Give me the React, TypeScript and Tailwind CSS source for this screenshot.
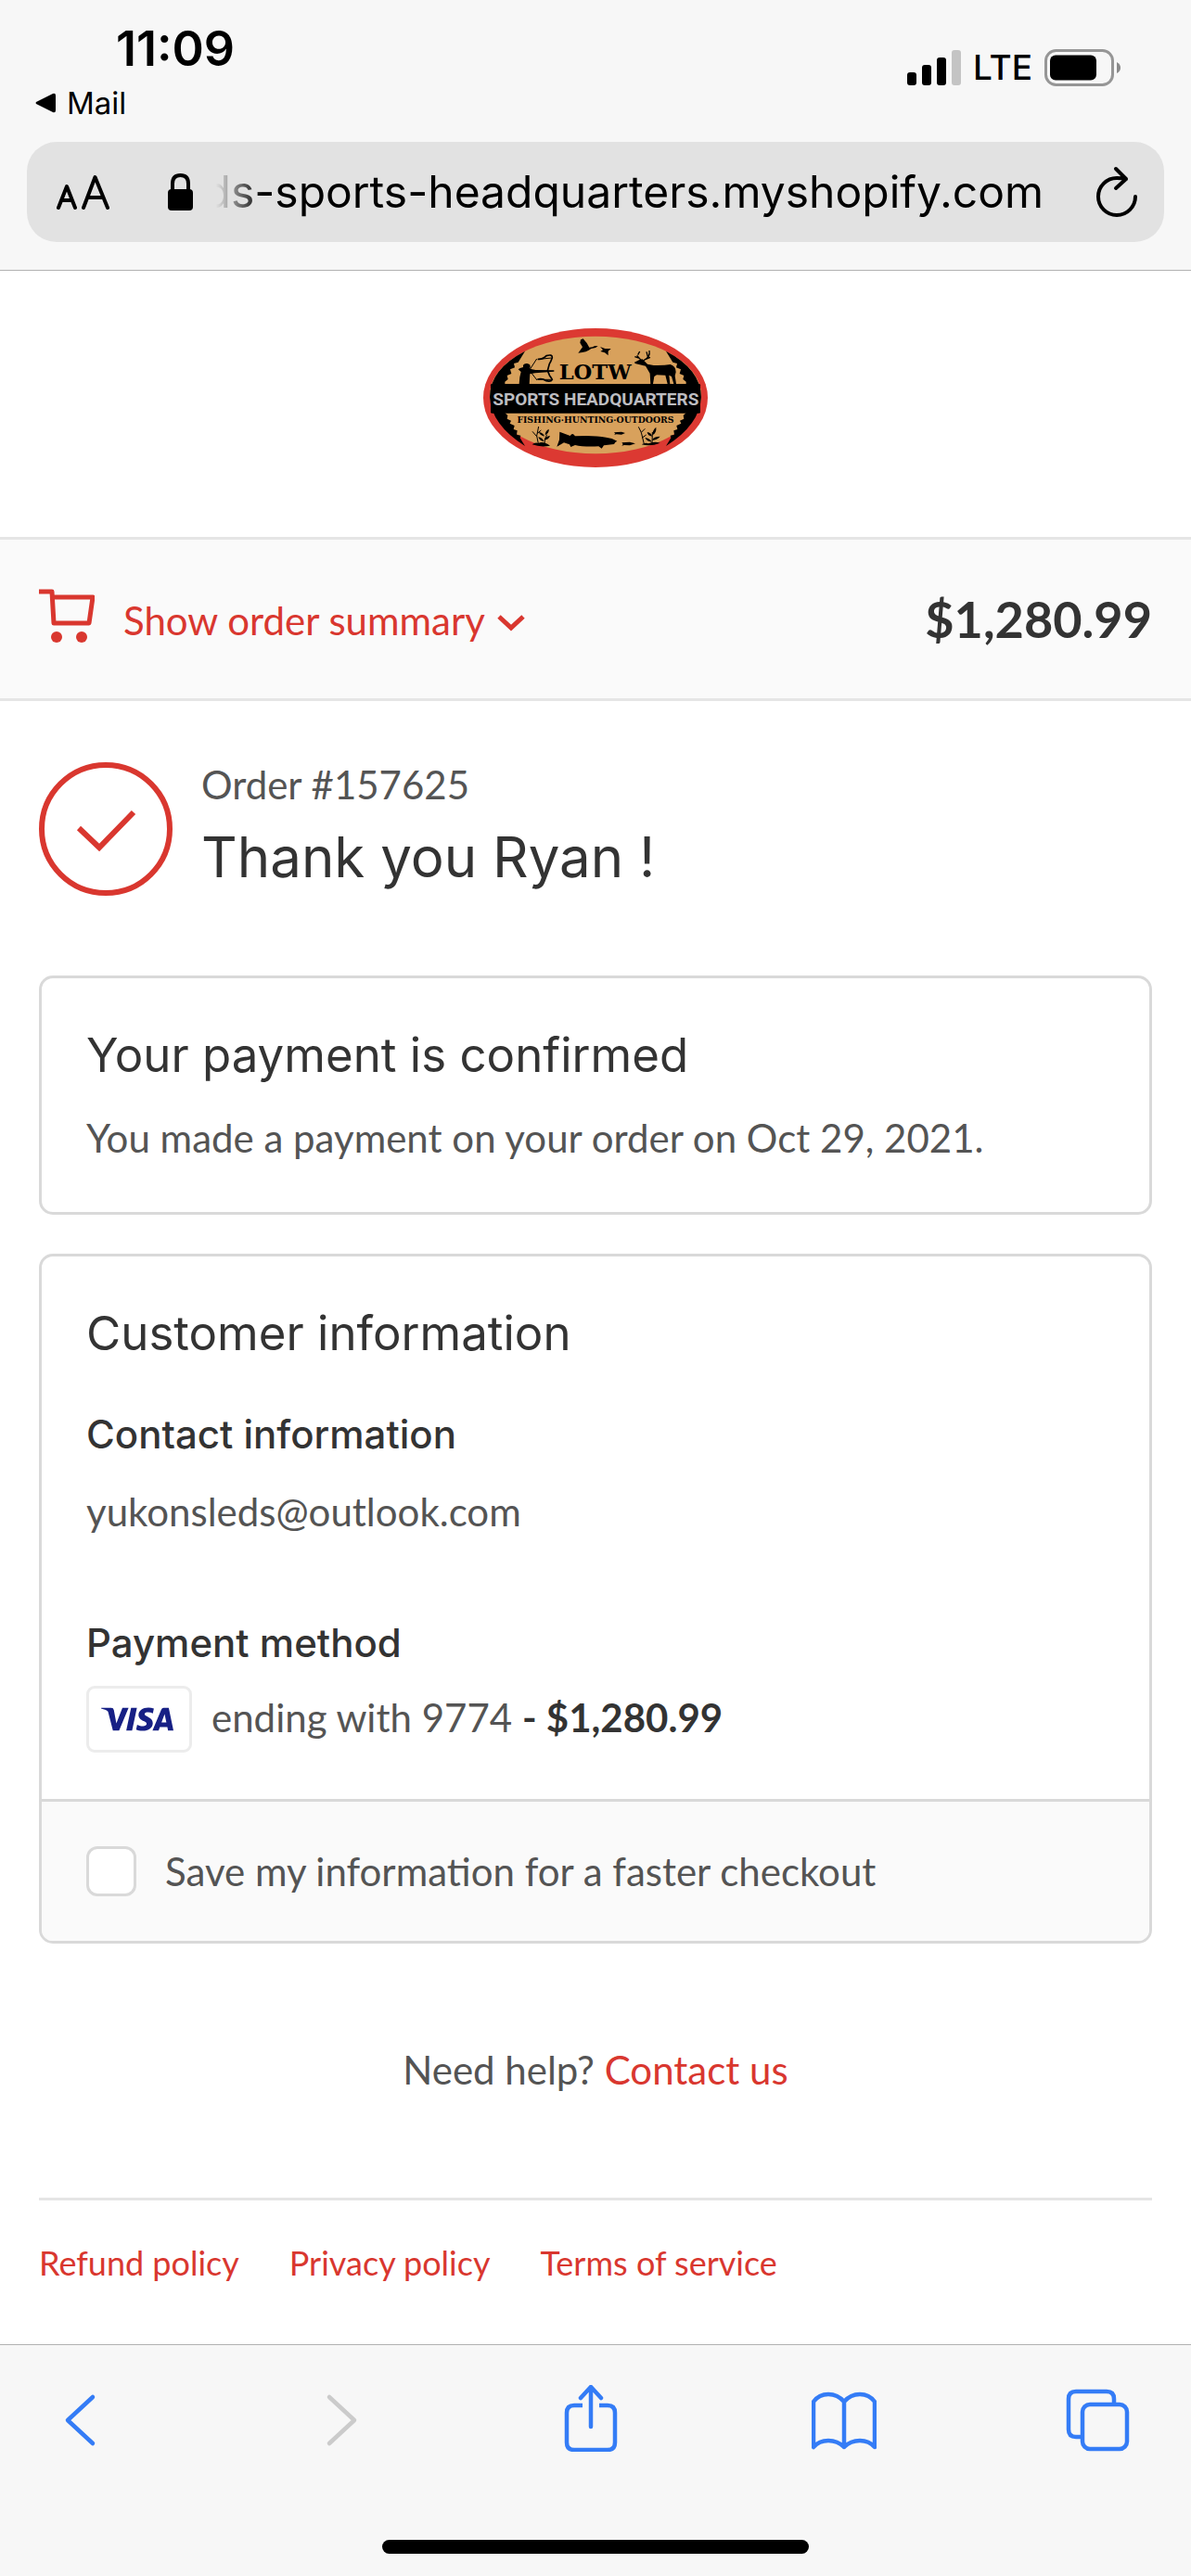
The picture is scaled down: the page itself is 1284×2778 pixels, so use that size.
/**
 * Order confirmation page
 * - shown inside a mobile browser frame (status bar, address bar, toolbar)
 * - order header, payment card, customer card and policy links
 */
import React, { useState } from "react";
import { SiVisa } from "react-icons/si";

const order = {
  number: "157625",
  customer: "Ryan",
  email: "yukonsleds@outlook.com",
  total: "$1,280.99",
  paidOn: "Oct 29, 2021",
  cardLast4: "9774",
};

const policies = ["Refund policy", "Privacy policy", "Terms of service"];

const INTER = "font-['Inter','Liberation_Sans',sans-serif]";

function StatusBar() {
  return (
    <div className="flex items-start justify-between pt-[23px] pr-[76px] pl-[38px]">
      <div>
        <div className="pl-[87px] text-[52px] leading-[60px] font-semibold">
          11:09
        </div>
        <button className="mt-2 flex items-center gap-3 text-[33px] leading-[40px]">
          <svg width="22" height="22" viewBox="0 0 22 22" aria-hidden="true">
            <path d="M1 10 19 1q3-1 3 2v16q0 3-3 2L1 12q-1-1 0-2z" />
          </svg>
          Mail
        </button>
      </div>
      <div className="flex h-[96px] items-center gap-[13px] pt-[4px]">
        {/* signal strength */}
        <svg width="58" height="38" viewBox="0 0 58 38" aria-hidden="true">
          <rect x="0" y="24" width="10" height="14" rx="3" />
          <rect x="16" y="16" width="10" height="22" rx="3" />
          <rect x="32" y="8" width="10" height="30" rx="3" />
          <rect x="48" y="0" width="10" height="38" rx="3" fill="#c4c4c4" />
        </svg>
        <span className="text-[37px] leading-[40px] font-medium">LTE</span>
        {/* battery */}
        <svg width="82" height="40" viewBox="0 0 82 40" aria-hidden="true">
          <rect
            x="1.5"
            y="1.5"
            width="72"
            height="37"
            rx="11"
            fill="none"
            stroke="#969696"
            strokeWidth="3"
          />
          <rect x="6" y="6.5" width="50" height="27" rx="6" />
          <path d="M78 14q4 2 4 6t-4 6z" fill="#8a8a8a" />
        </svg>
      </div>
    </div>
  );
}

function AddressBar() {
  return (
    <div className="mx-[29px] mt-[22px] flex h-[108px] items-center rounded-[32px] bg-[#e2e2e2] pr-[29px] pl-[32px]">
      <button aria-label="Page settings">
        <svg
          width="57"
          height="38"
          viewBox="0 0 57 38"
          fill="none"
          stroke="black"
          strokeWidth="4"
          strokeLinecap="round"
          strokeLinejoin="round"
          aria-hidden="true"
        >
          <path d="M2 36 11 13l9 23M5 28h12M29 36 41.500 3 55 36M34 25h16" />
        </svg>
      </button>
      <svg
        className="ml-[63px]"
        width="27"
        height="40"
        viewBox="0 0 27 40"
        aria-hidden="true"
      >
        <path
          d="M5 18v-7q0-9 8.500-9T22 11v7"
          fill="none"
          stroke="black"
          strokeWidth="4"
        />
        <rect y="17" width="27" height="23" rx="4" />
      </svg>
      <button className="ml-[5px] flex flex-1 justify-end overflow-hidden text-[48px] leading-[60px] whitespace-nowrap [mask-image:linear-gradient(to_right,transparent_20px,black_70px)]">
        ds-sports-headquarters.myshopify.com
      </button>
      <button className="ml-[57px]" aria-label="Reload">
        <svg
          width="44"
          height="56"
          viewBox="0 0 44 56"
          fill="none"
          stroke="black"
          strokeWidth="4"
          strokeLinecap="round"
          strokeLinejoin="round"
          aria-hidden="true"
        >
          <path d="M42 33A20 20 0 1 1 22 13q5 0 10 1M21 3l11 11-11 10" />
        </svg>
      </button>
    </div>
  );
}

function Logo() {
  return (
    <svg
      width="242"
      height="150"
      viewBox="34 42 726 450"
      role="img"
      aria-label="LOTW Sports Headquarters"
    >
      <ellipse cx="397" cy="267" rx="363" ry="225" fill="#dc3932" />
      <ellipse cx="397" cy="258" rx="342" ry="190" fill="#d8a15c" />
      {/* treelines on both sides */}
      <path d="M169 116Q55 175 55 265q5 90 114 158l-16-26 2-8-13-3 2-13-12-4 3-12-15-7 4-9-13-6 2-11-9-8V215l10-8-3-12 14-6-4-14 15-6-3-13 14-4z" />
      <path d="M625 116q113 59 114 149-5 90-114 158l16-26-2-8 13-3-2-13 12-4-3-12 15-7-4-9 13-6-2-11 9-8V215l-10-8 3-12-14-6 4-14-15-6 3-13-14-4z" />
      <rect x="58" y="222" width="678" height="95" rx="4" />
      {/* geese */}
      <path d="M341 122l14-19-8-14 2-10 8-3q12 12 20 28l10-1 8-4 10 1-8 5-14 3q-14 12-42 14zM412 102l16 6 19 0-9 8 0 14-11-9-14-4 8-5z" />
      {/* archer */}
      <path d="M150 222l2-22 4-17-9-8 6-4 10-3 0-7q4-6 13-5 10 2 10 9l-1 8 18 4 60 1v4l-61 5-17 3-2 34z" />
      <path
        d="M210 142q16 2 28-11 20-6 19 6-4 12-9 20l-6 22 6 15q6 8 9 14-4 8-20 4-14-10-28-4"
        fill="none"
        stroke="black"
        strokeWidth="5"
      />
      <path
        d="M207 141l-24 37 25 32M215 142l40-4M214 208l40 0"
        fill="none"
        stroke="black"
        strokeWidth="3"
      />
      {/* deer */}
      <path d="M523 152l16-8 10-2 16 16 20 4q34 1 54-3 18 5 18 25l-3 12 4 26h-8l-7-24-8-4 3 28h-8l-7-28-28-1-8 5-4 24h-8l-2-34q-8-14-14-24-20-4-34-8z" />
      <path
        d="M545 146l-14-16M537 138l-13-4M534 128l6-11M553 146q22-10 18-32M566 134l-4-16M560 142l14-6"
        fill="none"
        stroke="black"
        strokeWidth="4"
      />
      {/* pike and small fish */}
      <path d="M281 377l20 8 14 5q6-10 12-4l4 5q60-4 100 4 20 2 36 12l-6 4-4 6-33 4-7 10-10-7q-50 2-76-4l-14 6-4-8q-14-4-18-6l-23 13 8-22zM457 379l24-2 12 4-12 5-16-1-8 2 4-4zM482 412l26-2 18 5-18 6-18-1-8 2 4-5z" />
      {/* water plants */}
      <path
        d="M213 420l-6-30 6-30M207 392l-14-16M209 382l12-10M232 420q-2-20 8-34"
        fill="none"
        stroke="black"
        strokeWidth="3"
      />
      <path d="M232 392q-16-4-18-14 14 2 18 14zM234 388q0-14 12-20 2 12-12 20zM232 404q2-12 18-14-4 12-18 14zM230 408q-14-2-18-14 14 2 18 14z" />
      <path
        d="M554 416l-9-37-9-18M545 379l12-12M547 397l14-10M580 418l1-40"
        fill="none"
        stroke="black"
        strokeWidth="3"
      />
      <path d="M580 392q-14-2-16-14 14 2 16 14zM581 388q0-16 12-26 2 18-12 26zM580 404q4-12 26-12-10 12-26 12zM579 410q-16-2-22-14 16 2 22 14z" />
      <path d="M192 418q10-8 20-4 16-8 38 8-30 6-58-4zM546 418q12-8 22-3 18-8 38-2-30 12-60 5z" />
      <text
        x="396"
        y="208"
        textAnchor="middle"
        className="font-['DejaVu_Serif',serif] text-[68px] font-bold"
      >
        LOTW
      </text>
      <text
        x="398"
        y="291"
        textAnchor="middle"
        fill="#bdbdc1"
        className="font-['Roboto','Open_Sans',sans-serif] text-[57px] font-bold"
      >
        SPORTS HEADQUARTERS
      </text>
      <text
        x="397"
        y="349"
        textAnchor="middle"
        className="font-['DejaVu_Serif',serif] text-[28px] font-bold"
      >
        FISHING·HUNTING·OUTDOORS
      </text>
    </svg>
  );
}

function OrderSummaryBar() {
  return (
    <div className="flex h-[177px] items-center justify-between border-y-[3px] border-[#e5e5e5] bg-[#fafafa] px-[42px]">
      <button className="flex items-center text-[42px] leading-[64px] text-[#d9372f]">
        <svg
          className="self-start"
          width="60"
          height="58"
          viewBox="0 0 60 58"
          aria-hidden="true"
        >
          <path
            d="M0 3h14l2 34h38l4-28H15"
            fill="none"
            stroke="currentColor"
            strokeWidth="5"
            strokeLinejoin="round"
          />
          <circle cx="19" cy="52" r="6" fill="currentColor" />
          <circle cx="46" cy="52" r="6" fill="currentColor" />
        </svg>
        <span className="ml-[31px] pt-[2px]">Show order summary</span>
        <svg
          className="mt-[8px] ml-[13px]"
          width="30"
          height="18"
          viewBox="0 0 30 18"
          fill="none"
          stroke="currentColor"
          strokeWidth="5"
          aria-hidden="true"
        >
          <path d="M2 2l13 12L28 2" />
        </svg>
      </button>
      <span className="text-[54px] leading-[63px] font-bold text-[#333333]">
        {order.total}
      </span>
    </div>
  );
}

function Card({ title, children, footer }: {
  title: string;
  children: React.ReactNode;
  footer?: React.ReactNode;
}) {
  return (
    <section className="mt-[42px] overflow-hidden rounded-[15px] border-[3px] border-[#d9d9d9]">
      <div className="px-[48px] pt-[50px] pb-[48px]">
        <h2 className={`${INTER} text-[51px] leading-[66px] text-[#333333]`}>
          {title}
        </h2>
        {children}
      </div>
      {footer}
    </section>
  );
}

function SubHeading({ children }: { children: React.ReactNode }) {
  return (
    <h3
      className={`${INTER} text-[42px] leading-[54px] font-medium text-[#333333]`}
    >
      {children}
    </h3>
  );
}

function ToolButton({ label, disabled, children }: {
  label: string;
  disabled?: boolean;
  children: React.ReactNode;
}) {
  return (
    <button
      aria-label={label}
      disabled={disabled}
      className="disabled:text-[#cbcbcb]"
    >
      <svg
        width="70"
        height="72"
        viewBox="0 0 70 72"
        fill="none"
        stroke="currentColor"
        strokeWidth="4.500"
        strokeLinecap="round"
        strokeLinejoin="round"
        aria-hidden="true"
      >
        {children}
      </svg>
    </button>
  );
}

function Toolbar() {
  return (
    <footer className="border-t border-[#b2b2b2] bg-[#f7f7f7] pt-[43px] pb-[24px]">
      <nav className="flex justify-between pr-[65px] pl-[51px] text-[#347cf6]">
        <ToolButton label="Back">
          <path d="M49 13 22 38l27 25" />
        </ToolButton>
        <ToolButton label="Forward" disabled>
          <path d="M29 13l27 25-27 25" />
        </ToolButton>
        <ToolButton label="Share">
          <path
            d="M28 22H19q-8 0-8 8v32q0 8 8 8h36q8 0 8-8V30q0-8-8-8h-9"
            strokeLinecap="butt"
          />
          <path d="M37 45V3M26 14 37 2l11 12" />
        </ToolButton>
        <ToolButton label="Bookmarks">
          <path d="M2 67V18Q8 10 18 10t17 8q7-8 17-8t16 8v49q-6-7-16-7t-17 7q-7-7-17-7T2 67zM35 18v49" />
        </ToolButton>
        <ToolButton label="Tabs">
          <path d="M52 20v-5q0-8-8-8H11q-8 0-8 8v33q0 8 8 8h6" />
          <rect x="18" y="21" width="48" height="48" rx="8" />
        </ToolButton>
      </nav>
      <div className="mx-auto mt-[95px] h-[15px] w-[460px] rounded-full bg-black" />
    </footer>
  );
}

export default function App() {
  const [saveInfo, setSaveInfo] = useState(false);

  return (
    <div className="flex min-h-screen flex-col bg-white font-['Lato','Liberation_Sans',sans-serif] text-[42px] leading-[63px] text-[#545454]">
      <div
        className={`${INTER} border-b border-[#b2b2b2] bg-[#f7f7f7] pb-[30px] text-black`}
      >
        <StatusBar />
        <AddressBar />
      </div>

      <header className="flex justify-center pt-[62px] pb-[75px]">
        <a href="#home">
          <Logo />
        </a>
      </header>
      <OrderSummaryBar />

      <main className="flex-1 px-[42px] pt-[59px]">
        {/* order header */}
        <div className="mb-[86px] flex items-end gap-[31px]">
          <svg
            width="144"
            height="144"
            viewBox="0 0 144 144"
            fill="none"
            stroke="#d9372f"
            aria-hidden="true"
          >
            <circle cx="72" cy="72" r="69" strokeWidth="6" />
            <path d="M43 71l22 21 37-38" strokeWidth="6" />
          </svg>
          <div>
            <p>Order #{order.number}</p>
            <h1
              className={`${INTER} mt-1 text-[60px] leading-[84px] text-[#333333]`}
            >
              Thank you {order.customer} !
            </h1>
          </div>
        </div>

        <Card title="Your payment is confirmed">
          <p className="mt-[25px]">
            You made a payment on your order on {order.paidOn}.
          </p>
        </Card>

        <Card
          title="Customer information"
          footer={
            <label className="flex items-center gap-[31px] border-t-[3px] border-[#d9d9d9] bg-[#fafafa] p-[48px] leading-[54px]">
              <input
                type="checkbox"
                checked={saveInfo}
                onChange={(e) => setSaveInfo(e.target.checked)}
                className="size-[54px] appearance-none rounded-[12px] border-[3px] border-[#d9d9d9] bg-white checked:bg-[#d9372f]"
              />
              Save my information for a faster checkout
            </label>
          }
        >
          <div className="mt-[49px]">
            <SubHeading>Contact information</SubHeading>
            <p className="mt-[25px]">{order.email}</p>
          </div>
          <div className="mt-[83px]">
            <SubHeading>Payment method</SubHeading>
            <div className="mt-[19px] mb-0.5 flex items-start gap-[21px]">
              <span className="flex h-[72px] w-[114px] items-center justify-center rounded-[9px] border-[3px] border-[#ececec] pr-1">
                <SiVisa
                  title="Visa"
                  viewBox="0 8 24 8"
                  className="h-[26px] w-[78px] text-[#172085]"
                />
              </span>
              <p className="leading-[69px]">
                ending with {order.cardLast4}{" "}
                <strong className="font-bold text-[#333333]">
                  - {order.total}
                </strong>
              </p>
            </div>
          </div>
        </Card>

        <p className="mt-[105px] text-center">
          Need help?{" "}
          <a href="#contact" className="text-[#d9372f]">
            Contact us
          </a>
        </p>

        <nav className="mt-[106px] flex gap-[54px] border-t-[3px] border-[#e5e5e5] pt-[40px] text-[36px] leading-[54px] text-[#d9372f]">
          {policies.map((policy) => (
            <a key={policy} href="#policy">
              {policy}
            </a>
          ))}
        </nav>
      </main>

      <Toolbar />
    </div>
  );
}
